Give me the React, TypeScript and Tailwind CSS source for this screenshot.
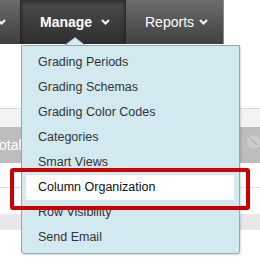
const items = [
  "Grading Periods",
  "Grading Schemas",
  "Grading Color Codes",
  "Categories",
  "Smart Views",
  "Column Organization",
  "Row Visibility",
  "Send Email",
];

function Chevron({ className = "" }: { className?: string }) {
  return (
    <svg width="9" height="6" viewBox="0 0 9 6" className={className}>
      <path d="M1 1 L4.5 4.5 L8 1" fill="none" stroke="#f2f2f2" strokeWidth="2.2" />
    </svg>
  );
}

export default function App() {
  return (
    <div className="relative w-[260px] h-[265px] overflow-hidden bg-white font-['Liberation_Sans',Arial,sans-serif]">
      {/* tab bar */}
      <div className="flex h-[44px]">
        <div className="w-[20px] flex items-center bg-gradient-to-b from-[#6b6b6b] to-[#3f3f3f]">
          <Chevron className="-ml-[3px]" />
        </div>
        <div className="w-[1px] bg-[#262626]" />
        <div className="w-[104px] flex items-center pl-[19px] bg-gradient-to-b from-[#4c4c4c] to-[#2f2f2f] shadow-[inset_0_2px_4px_rgba(0,0,0,0.45)]">
          <span className="text-[14px] font-bold text-white">Manage</span>
          <Chevron className="ml-[9px]" />
        </div>
        <div className="w-[99px] flex items-center pl-[19px] bg-gradient-to-b from-[#6d6d6d] to-[#404040] border-l border-[#2a2a2a] border-r border-r-[#8a8a8a]">
          <span className="text-[14px] text-white">Reports</span>
          <Chevron className="ml-[5px]" />
        </div>
      </div>

      {/* page behind the menu */}
      <div className="h-[64px]" />
      <div className="h-[19px] border-t border-[#d9d9d9] bg-[#f3f3f3]" />
      <div className="h-[36px] flex items-center bg-[#bdbdbd]">
        <span className="-ml-[8px] text-[14px] text-white">Total</span>
        <svg width="16" height="16" viewBox="0 0 16 16" className="ml-auto -mr-[2px] -mt-[6px]">
          <circle cx="8" cy="8" r="7" fill="#cbcbcb" stroke="#c2c2c2" />
          <path d="M5 5 L11 11" stroke="#b0b0b0" strokeWidth="1.5" />
        </svg>
      </div>
      <div className="h-[24px]" />
      <div className="h-[27px] border-t border-[#dcdcdc]" />
      <div className="h-[16px] bg-[#e8e8e8]" />

      {/* caret */}
      <svg width="22" height="9" viewBox="0 0 22 9" className="absolute left-[64px] top-[37px]">
        <path d="M0 9 L11 0.5 L22 9 Z" fill="#d7ecf1" stroke="#9fb5bb" strokeWidth="1" />
      </svg>

      {/* dropdown */}
      <div className="absolute left-[21px] top-[45px] w-[219px] h-[209px] border border-[#a3a3a3] rounded-b-[3px] bg-[#d2e9ef] pt-[4px] shadow-[1px_1px_2px_rgba(0,0,0,0.15)]">
        {items.map((item) =>
          item === "Column Organization" ? (
            <div
              key={item}
              className="h-[25px] ml-[4px] mr-[5px] pl-[12px] flex items-center bg-white text-[12.5px] text-[#111]"
            >
              {item}
            </div>
          ) : (
            <div key={item} className="h-[25px] pl-[16px] flex items-center text-[12.5px] text-[#333]">
              {item}
            </div>
          )
        )}
      </div>

      {/* highlight box */}
      <div className="absolute left-[10px] top-[168px] w-[240px] h-[42px] border-[4px] border-[#cc0000] rounded-[3px]" />
    </div>
  );
}
